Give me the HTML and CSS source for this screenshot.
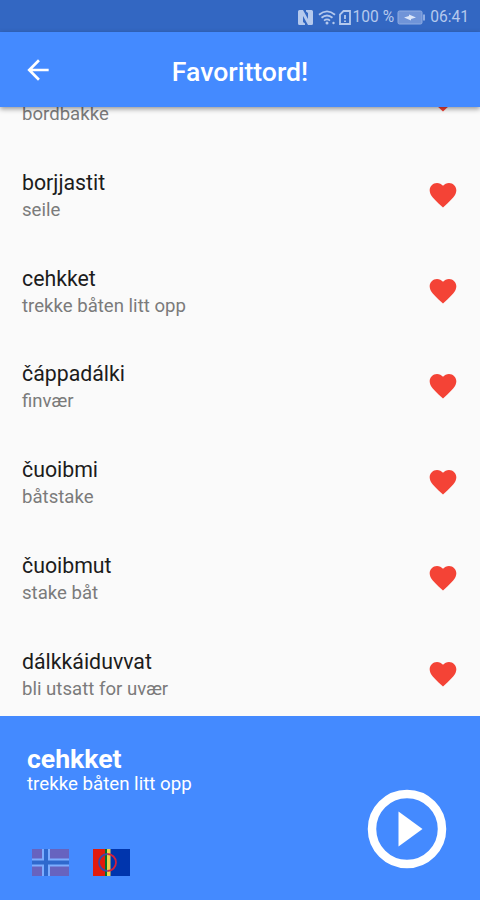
FILE: index.html
```
<!DOCTYPE html>
<html lang="no">
<head>
    <meta charset="UTF-8">
    <meta name="viewport" content="width=device-width, initial-scale=1.0">
    <title>Favorittord!</title>
    <link rel="stylesheet" href="styles.css">
</head>
<body>

    <svg class="symbols" width="0" height="0">
        <symbol id="heart" viewBox="0 0 24 24">
            <path d="M12 21.35l-1.45-1.32C5.4 15.36 2 12.28 2 8.5 2 5.42 4.42 3 7.5 3c1.74 0 3.41.81 4.5 2.09C13.09 3.81 14.76 3 16.5 3 19.58 3 22 5.42 22 8.5c0 3.78-3.4 6.86-8.55 11.54L12 21.35z"/>
        </symbol>
    </svg>

    <div class="app">
        <div class="status-bar">
            <svg class="nfc" width="15" height="15" viewBox="0 0 15 15">
                <path d="M1.500 0H5L10 9V3L8 1.500V0H13.500Q15 0 15 1.500V13.500Q15 15 13.500 15H10L5 6V12L7 13.500V15H1.500Q0 15 0 13.500V1.500Q0 0 1.500 0z"/>
            </svg>
            <svg class="wifi" width="18" height="15" viewBox="0 0 18 15">
                <path d="M1 4.800Q9-2 17 4.800M3.500 7.800Q9 3.200 14.500 7.800M6 10.600Q9 8.200 12 10.600"/>
                <circle cx="9" cy="13" r="1.500"/>
                <circle cx="15.500" cy="13" r="1.200"/>
            </svg>
            <svg class="sim" width="12" height="15" viewBox="0 0 12 15">
                <path d="M4.500 1H11V14H1V4.500zM6 5v4M6 10.500v1.500"/>
            </svg>
            <span class="percent">100 %</span>
            <svg class="battery" width="29" height="15" viewBox="0 0 29 15">
                <rect x="1" y="1" width="24" height="13" rx="1.500"/>
                <path class="cap" d="M26 4.500h2v6h-2z"/>
                <path class="bolt" d="M7 7.500l5-1.500V4.500l7 3-5 1.500v1.500z"/>
            </svg>
            <span class="clock">06:41</span>
        </div>

        <header class="app-bar">
            <svg class="back" width="32" height="32" viewBox="0 0 24 24">
                <path d="M20 11H7.83l5.590-5.590L12 4l-8 8 8 8 1.410-1.410L7.830 13H20v-2z"/>
            </svg>
            <h1>Favorittord!</h1>
        </header>

        <main class="word-list">
            <ul>
                <li>
                    <div class="scrolled"><p>bordbakke</p></div>
                    <svg class="heart"><use href="#heart"/></svg>
                </li>
                <li>
                    <div><h2>borjjastit</h2><p>seile</p></div>
                    <svg class="heart"><use href="#heart"/></svg>
                </li>
                <li>
                    <div><h2>cehkket</h2><p>trekke båten litt opp</p></div>
                    <svg class="heart"><use href="#heart"/></svg>
                </li>
                <li>
                    <div><h2>čáppadálki</h2><p>finvær</p></div>
                    <svg class="heart"><use href="#heart"/></svg>
                </li>
                <li>
                    <div><h2>čuoibmi</h2><p>båtstake</p></div>
                    <svg class="heart"><use href="#heart"/></svg>
                </li>
                <li>
                    <div><h2>čuoibmut</h2><p>stake båt</p></div>
                    <svg class="heart"><use href="#heart"/></svg>
                </li>
                <li>
                    <div><h2>dálkkáiduvvat</h2><p>bli utsatt for uvær</p></div>
                    <svg class="heart"><use href="#heart"/></svg>
                </li>
            </ul>
        </main>

        <footer class="player">
            <div class="player-info">
                <h3>cehkket</h3>
                <p>trekke båten litt opp</p>
                <div class="flags">
                    <!-- Norwegian -->
                    <svg class="flag inactive" viewBox="0 0 37 27">
                        <path fill="#ba0c2f" d="M0 0h37v27H0z"/>
                        <path fill="#fff" d="M10 0h8v27h-8zM0 9.500h37v8H0z"/>
                        <path fill="#00205b" d="M12 0h4v27h-4zM0 11.500h37v4H0z"/>
                    </svg>
                    <!-- Sami -->
                    <svg class="flag" viewBox="0 0 37 27">
                        <path fill="#0035ad" d="M0 0h37v27H0z"/>
                        <path fill="#e21b0c" d="M0 0h12v27H0z"/>
                        <path fill="#007229" d="M12 0h2v27h-2z"/>
                        <path fill="#f0d050" d="M14 0h3.500v27H14z"/>
                        <path class="ring" stroke="#d4213d" d="M14.500 5a8.500 8.500 0 0 1 0 17"/>
                        <path class="ring" stroke="#3a4aa5" d="M14.500 5a8.500 8.500 0 0 0 0 17"/>
                    </svg>
                </div>
            </div>
            <svg class="play" width="80" height="80" viewBox="0 0 80 80">
                <circle cx="40" cy="40" r="35"/>
                <path d="M31.500 22.500v35L55.500 40z"/>
            </svg>
        </footer>
    </div>

</body>
</html>
```
FILE: styles.css
```
/* General Styles */
body {
    font-family: Roboto, "Noto Sans", sans-serif;
    margin: 0;
    background-color: #fafafa;
}

h1, h2, h3, p, ul {
    margin: 0;
    padding: 0;
}

svg {
    display: block;
    flex-shrink: 0;
}

.symbols {
    display: none;
}

.app {
    display: flex;
    flex-direction: column;
    height: 900px;
    overflow: hidden;
}

/* Status bar */
.status-bar {
    display: flex;
    align-items: center;
    justify-content: flex-end;
    box-sizing: border-box;
    height: 32px;
    padding: 2px 11px 0 0;
    background-color: #3367c2;
    color: #b5c9ed;
    font-size: 15.6px;
    fill: #b5c9ed;
}

.wifi {
    margin: 0 3px 0 5px;
}

.wifi path, .sim path {
    fill: none;
    stroke: #b5c9ed;
    stroke-width: 1.8;
}

.percent {
    margin: 0 3px 0 2px;
}

.battery rect {
    fill: #7094d8;
    stroke: #8eace2;
}

.battery .cap {
    fill: #8eace2;
}

.battery .bolt {
    fill: #dce7fa;
}

.clock {
    margin-left: 4px;
}

/* App bar */
.app-bar {
    position: relative;
    z-index: 1;
    display: grid;
    grid-template-columns: 64px 1fr 64px;
    align-items: center;
    flex-shrink: 0;
    height: 75px;
    background-color: #448aff;
    color: #fff;
    box-shadow: 0 2px 5px rgba(0, 0, 0, 0.4);
}

.back {
    margin-left: 22px;
    fill: #fff;
}

h1 {
    font-size: 26.6px;
    font-weight: 500;
    text-align: center;
    padding-top: 3px;
}

/* Word list */
.word-list {
    height: 608.5px;
    flex-shrink: 0;
    overflow: hidden;
}

.word-list ul {
    list-style: none;
    margin-top: -56px;
}

.word-list li {
    display: flex;
    align-items: center;
    justify-content: space-between;
    height: 95.85px;
    padding: 0 21px 0 22px;
}

.word-list li div {
    padding-top: 3px;
}

.word-list .scrolled {
    padding-top: 31px;
}

.word-list h2 {
    font-size: 21.3px;
    font-weight: 400;
    line-height: 28px;
    color: #1c1c1c;
}

.word-list p {
    font-size: 18.6px;
    line-height: 27px;
    color: #7b7b7b;
}

.heart {
    width: 32px;
    height: 32px;
    fill: #f44336;
}

/* Player */
.player {
    display: flex;
    justify-content: space-between;
    flex: 1;
    padding: 0 33px 0 27px;
    background-color: #448aff;
    color: #fff;
}

.player h3 {
    font-size: 26.6px;
    font-weight: 700;
    line-height: 30px;
    margin-top: 28px;
}

.player p {
    font-size: 18.7px;
    line-height: 21px;
}

.flags {
    display: flex;
    gap: 24px;
    margin: 54px 0 0 5px;
}

.flag {
    width: 37px;
    height: 27px;
}

.inactive {
    opacity: 0.3;
}

.ring {
    fill: none;
    stroke-width: 1.8;
}

.play {
    margin-top: 73px;
}

.play circle {
    fill: none;
    stroke: #fff;
    stroke-width: 8.5;
}

.play path {
    fill: #fff;
}
```
